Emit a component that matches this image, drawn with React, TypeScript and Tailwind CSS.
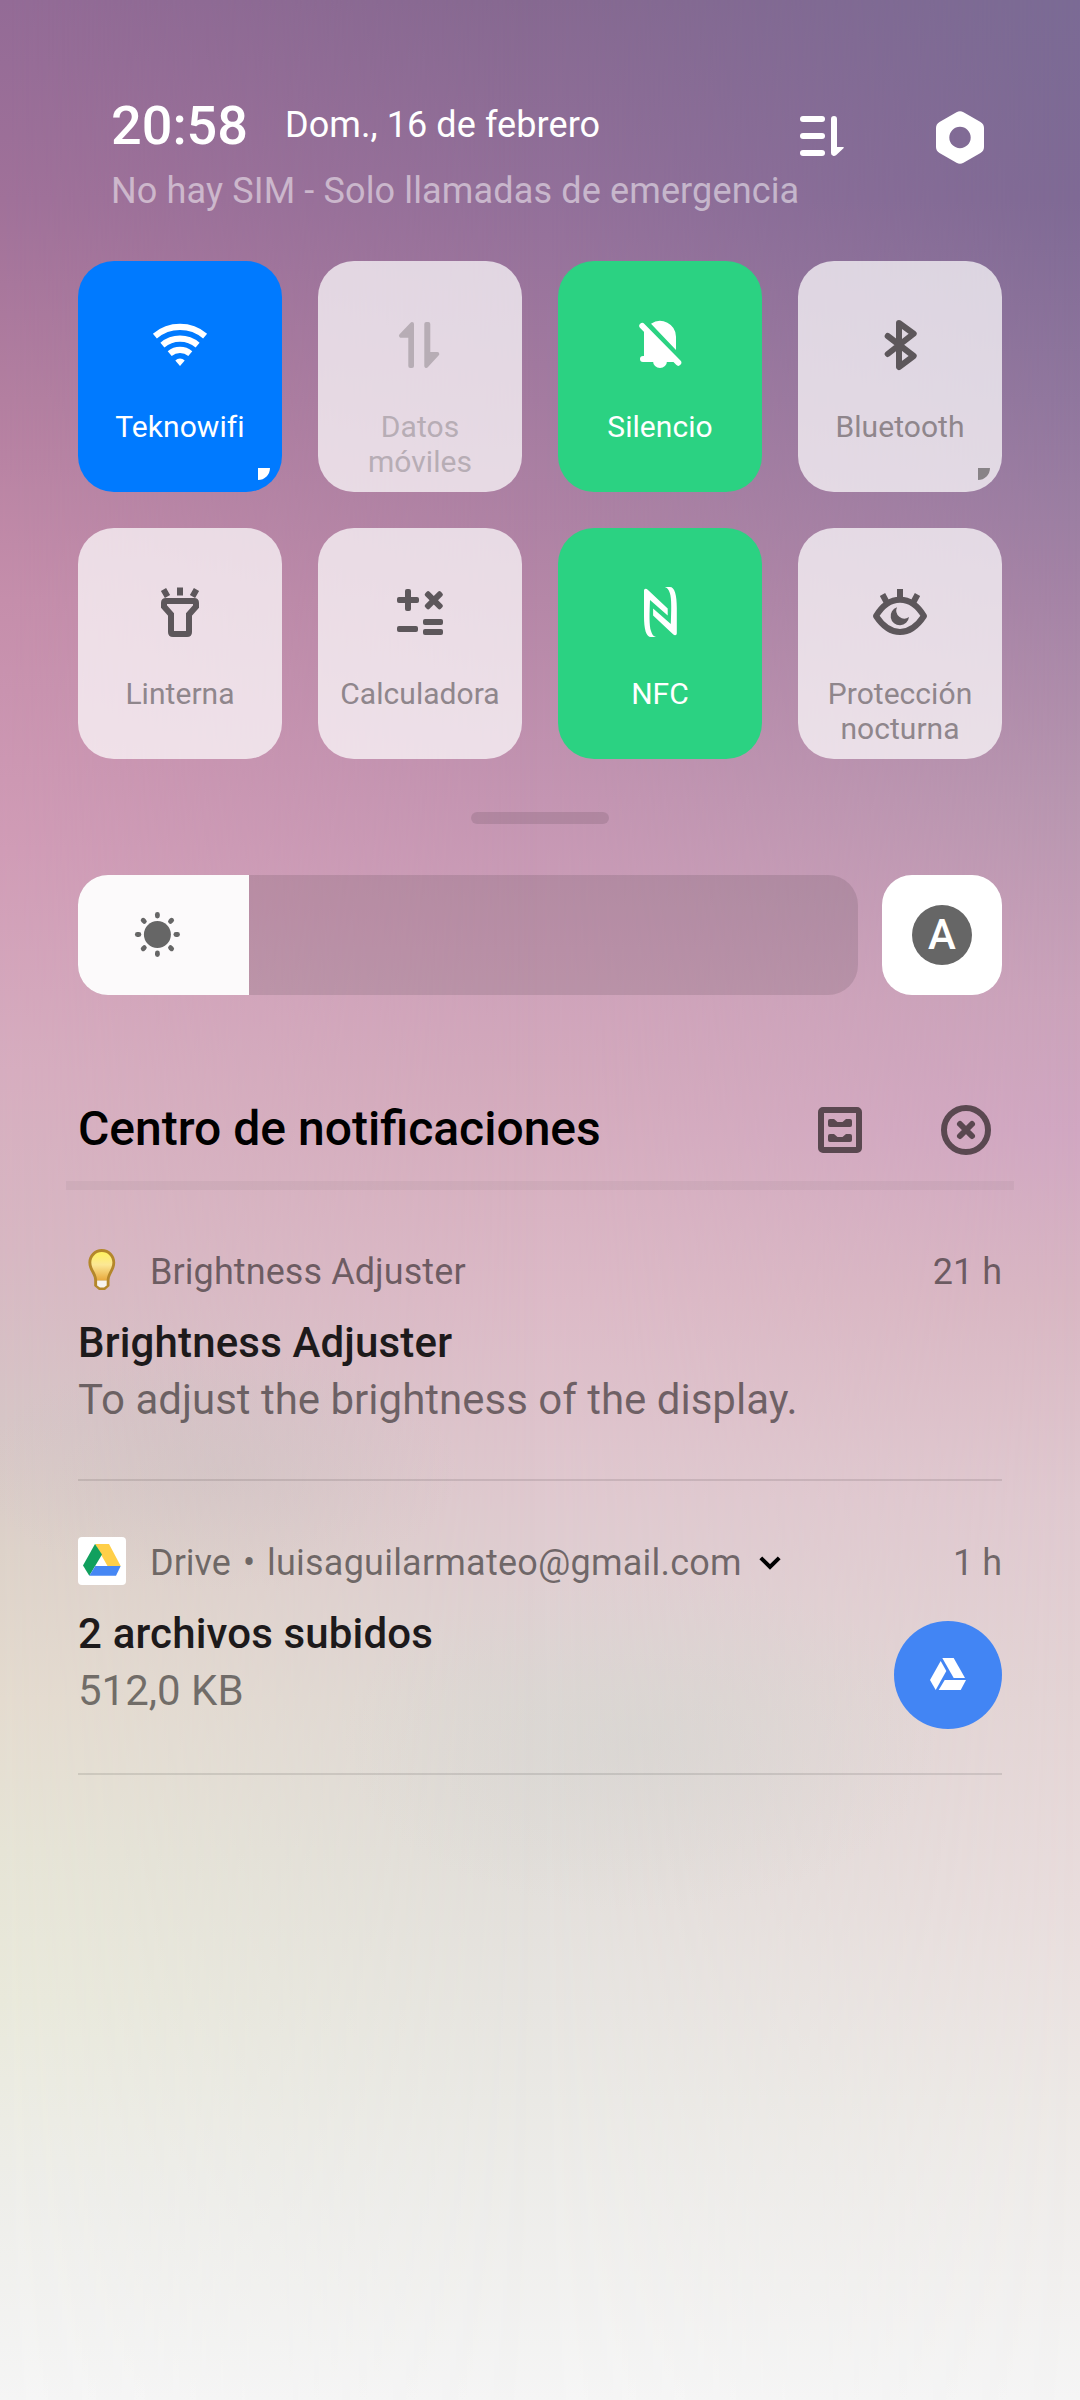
import type { ReactNode } from "react";
import clsx from "clsx";

interface Tile {
  label: string;
  state: "wifi" | "on" | "off" | "disabled";
  icon: ReactNode;
  expandable?: boolean;
}

interface NotificationProps {
  icon: ReactNode;
  app: ReactNode;
  time: string;
  title: string;
  body: string;
  largeIcon?: ReactNode;
  className?: string;
}

const tiles: Tile[] = [
  {
    label: "Teknowifi",
    state: "wifi",
    expandable: true,
    icon: (
      <>
        <g fill="none" stroke="currentColor" strokeWidth="6.2">
          <path d="M4.9 21.1A39 39 0 0 1 55.1 21.1" />
          <path d="M12.4 30.1A27.3 27.3 0 0 1 47.6 30.1" />
          <path d="M19.7 38.7A16 16 0 0 1 40.3 38.7" />
        </g>
        <path d="M30 51L25.3 45.4A7 7 0 0 1 34.7 45.4Z" />
      </>
    ),
  },
  {
    label: "Datos móviles",
    state: "disabled",
    icon: (
      <g stroke="currentColor" strokeWidth="4" strokeLinejoin="round">
        <path d="M22 9L11 20.7H20.3V51H22Z" />
        <path d="M36.3 9H38.3V39H47.3L36.3 51Z" />
      </g>
    ),
  },
  {
    label: "Silencio",
    state: "on",
    icon: (
      <>
        <path d="M21 8.7A16 16 0 0 1 46 21.7V35Z" />
        <path d="M14 13V41H13A3 3 0 0 0 13 47H48Z" />
        <path d="M23 46A7 7 0 0 0 37 46Z" />
        <path d="M12.3 11L48.3 47.7" stroke="currentColor" strokeWidth="6" strokeLinecap="round" />
      </>
    ),
  },
  {
    label: "Bluetooth",
    state: "off",
    expandable: true,
    icon: (
      <path
        d="M17.7 21L43.7 41L29 52V8L43.7 18.7L17.7 39"
        fill="none"
        stroke="currentColor"
        strokeWidth="6"
        strokeLinecap="round"
        strokeLinejoin="round"
      />
    ),
  },
  {
    label: "Linterna",
    state: "off",
    icon: (
      <g fill="none" stroke="currentColor" strokeWidth="6">
        <path d="M16 19H44Q46 19 46 21V24.5L39 32.5V50Q39 52 37 52H23Q21 52 21 50V32.5L14 24.5V21Q14 19 16 19Z" />
        <path d="M30 5.5V13.5M13.5 7.5L17.5 14.5M46.5 7.5L42.5 14.5" />
      </g>
    ),
  },
  {
    label: "Calculadora",
    state: "off",
    icon: (
      <>
        <rect x="7" y="15" width="22" height="6" rx="2" />
        <rect x="15" y="7" width="6" height="22" rx="2" />
        <g transform="rotate(45 43.8 18.3)">
          <rect x="32.8" y="15.3" width="22" height="6" rx="2" />
          <rect x="40.8" y="7.3" width="6" height="22" rx="2" />
        </g>
        <rect x="7" y="44" width="21" height="6" rx="2" />
        <rect x="33" y="37" width="20" height="6" rx="2" />
        <rect x="33" y="47" width="20" height="6" rx="2" />
      </>
    ),
  },
  {
    label: "NFC",
    state: "on",
    icon: (
      <>
        <path d="M14 9C14 6.5 16 6 18 8L37.7 26.5V33.5L20 18C19.5 30 19 44 21 49C22 52.5 23.5 54.5 26 55H21C16 55 14 47 14 34Z" />
        <path
          transform="rotate(180 30.4 30)"
          d="M14 9C14 6.5 16 6 18 8L37.7 26.5V33.5L20 18C19.5 30 19 44 21 49C22 52.5 23.5 54.5 26 55H21C16 55 14 47 14 34Z"
        />
      </>
    ),
  },
  {
    label: "Protección nocturna",
    state: "off",
    icon: (
      <>
        <g fill="none" stroke="currentColor" strokeWidth="6" strokeLinejoin="round">
          <path d="M6 34C12 24 20 17.7 30 17.7S48 24 54 34C48 43 40 50 30 50S12 43 6 34Z" />
          <path d="M30 7V16M12.5 12.5L16.5 20M47.5 12.5L43.5 20" />
        </g>
        <path d="M27 25.3A9.2 9.2 0 1 0 39 35A8 8 0 0 1 27 25.3Z" />
      </>
    ),
  },
];

function Wallpaper() {
  return (
    <div className="absolute inset-0 -z-10 bg-[linear-gradient(180deg,#7b6b95_0px,#7f6a95_200px,#90779e_400px,#a584a6_600px,#b896b0_800px,#cba3bb_1000px,#d1a7c2_1130px,#d9b7c3_1300px,#e0c9d0_1500px,#e4d4d5_1700px,#e9dddd_1900px,#ede9e6_2100px,#f5f5f5_2400px)]">
      <div className="absolute inset-0 bg-[linear-gradient(180deg,#866991_0px,#93709a_200px,#a47ba0_400px,#b587a7_600px,#c495b2_800px,#cda0b9_950px,#d4abbd_1100px,#dcbac7_1300px,#dfc9cf_1500px,#dfd8d5_1700px,#e2deda_1850px,#eae9e5_2100px,#f5f5f5_2400px)] [mask-image:linear-gradient(to_right,#000_50%,transparent)]" />
      <div className="absolute inset-0 bg-[linear-gradient(180deg,#936b96_0px,#a07199_200px,#b37fa0_400px,#c58eab_600px,#d09cb6_850px,#d6adbf_1070px,#d7b7c2_1250px,#d6c5c6_1420px,#ddd2c9_1550px,#e4dbcf_1700px,#e6e4d6_1850px,#e9e9db_2000px,#eeeeea_2200px,#f5f5f5_2400px)] [mask-image:linear-gradient(to_right,#000,transparent_50%)]" />
      <div className="absolute inset-0 bg-[radial-gradient(240px_120px_at_220px_1470px,rgba(195,188,188,0.28),transparent),radial-gradient(300px_170px_at_640px_1740px,rgba(208,210,205,0.4),transparent)]" />
    </div>
  );
}

function TileButton({ tile }: { tile: Tile }) {
  return (
    <button
      className={clsx(
        "relative flex h-[231px] flex-col items-center rounded-[36px] pt-[54px]",
        tile.state === "wifi" && "bg-[#007aff] text-white",
        tile.state === "on" && "bg-[#2bd282] text-white",
        tile.state === "off" && "bg-white/71 text-[#5d575b]",
        tile.state === "disabled" && "bg-white/71 text-[#b7adb5]"
      )}
    >
      <svg viewBox="0 0 60 60" className="h-[60px] w-[60px]" fill="currentColor">
        {tile.icon}
      </svg>
      <span
        className={clsx(
          "mt-[34px] w-[172px] text-center text-[30px] leading-[35px] tracking-[0.05px]",
          tile.state === "off" && "text-[#8f868c]"
        )}
      >
        {tile.label}
      </span>
      {tile.expandable && (
        <span
          className={clsx(
            "absolute right-3 bottom-3 h-3 w-3 rounded-br-full",
            tile.state === "off" ? "bg-[#888387]" : "bg-white"
          )}
        />
      )}
    </button>
  );
}

function Header() {
  return (
    <header className="flex h-[261px] justify-between pt-[94px] pr-[18px] pl-[33px] text-white">
      <div>
        <div className="flex items-start">
          <span className="text-[54px] leading-[64px] font-medium">20:58</span>
          <span className="mt-[9px] ml-[37px] text-[36px] leading-[44px] tracking-[0.08px]">Dom., 16 de febrero</span>
        </div>
        <p className="mt-[11px] text-[36px] leading-[44px] tracking-[0.14px] whitespace-nowrap text-white/50">
          No hay SIM - Solo llamadas de emergencia
        </p>
      </div>
      <div className="-ml-20 flex items-start pt-[17px]">
        <svg viewBox="0 0 44 40" className="mt-[5px] mr-[92px] h-10 w-11" fill="currentColor">
          <rect width="25" height="6" rx="3" />
          <rect y="17" width="25" height="6" rx="3" />
          <rect y="34" width="25" height="6" rx="3" />
          <path d="M31 3A3 3 0 0 1 37 3V31H43Q44.5 31.2 43.5 32.3L36 39.2Q34.5 40.4 33 39.8Q31 39 31 37Z" />
        </svg>
        <svg viewBox="0 0 48 53" className="h-[53px] w-12" fill="currentColor" fillRule="evenodd">
          <path d="M20.5 1.2Q24-.9 27.5 1.2L44.5 11Q48 13.2 48 17V36Q48 39.8 44.5 42L27.5 51.8Q24 53.9 20.5 51.8L3.5 42Q0 39.8 0 36V17Q0 13.2 3.5 11ZM24 15.8A10.7 10.7 0 1 0 24 37.2A10.7 10.7 0 1 0 24 15.8Z" />
        </svg>
      </div>
    </header>
  );
}

function BrightnessRow() {
  return (
    <div className="mt-[51px] flex gap-6">
      <div className="h-[120px] w-[780px] overflow-hidden rounded-[30px] bg-black/10">
        <div className="h-full w-[171px] bg-[#fcfafb] pt-9 pl-[55px]">
          <svg viewBox="0 0 48 48" className="h-12 w-12" fill="#666">
            <circle cx="24.4" cy="23.5" r="13.5" />
            {[0, 45, 90, 135, 180, 225, 270, 315].map((angle) => (
              <rect
                key={angle}
                x="22"
                y="1"
                width="4.8"
                height="6.4"
                rx="2.4"
                transform={`rotate(${angle} 24.4 23.5)`}
              />
            ))}
          </svg>
        </div>
      </div>
      <button className="flex h-[120px] w-[120px] items-center justify-center rounded-[30px] bg-white">
        <span className="flex h-[60px] w-[60px] items-center justify-center rounded-full bg-[#666] text-[42px] leading-none font-medium text-white">
          A
        </span>
      </button>
    </div>
  );
}

function Notification({ icon, app, time, title, body, largeIcon, className }: NotificationProps) {
  return (
    <article className={clsx("border-b-2 border-black/10 pt-14", className)}>
      <div className="flex h-12 items-center text-[36px] text-black/50">
        {icon}
        <div className="mt-[3px] ml-6 flex items-center leading-[48px]">{app}</div>
        <span className="mt-[3px] ml-auto leading-[48px]">{time}</span>
      </div>
      <div className="mt-5 flex justify-between text-[42px] leading-[57px]">
        <div>
          <h3 className="font-medium tracking-[0.16px] text-[#1d1a1b]">{title}</h3>
          <p className="text-black/50">{body}</p>
        </div>
        {largeIcon}
      </div>
    </article>
  );
}

function BulbIcon() {
  return (
    <svg viewBox="0 0 48 48" className="h-12 w-12">
      <defs>
        <linearGradient id="bulb" x1="0" y1="0" x2="0" y2="1">
          <stop offset="0" stopColor="#fff25f" />
          <stop offset="0.45" stopColor="#fbe795" />
          <stop offset="1" stopColor="#e8a93c" />
        </linearGradient>
      </defs>
      <path
        d="M23.8 3C31.5 3 37.2 9 37.2 16.5C37.2 24 31.8 28 31.5 34V40L27 44H21L16.2 40V34C16 28 10.4 24 10.4 16.5C10.4 9 16.3 3 23.8 3Z"
        fill="#b4872a"
      />
      <path
        d="M23.8 6C30 6 34.4 11 34.4 16.5C34.4 23 29 27 28.6 34.5H19.2C18.8 27 13.3 23 13.3 16.5C13.3 11 17.8 6 23.8 6Z"
        fill="url(#bulb)"
      />
      <path d="M19.1 34.5H28.7V39.5L26 41.5H22L19.1 39.5Z" fill="#f7f4f0" />
    </svg>
  );
}

function DriveIcon() {
  return (
    <svg viewBox="0 0 48 48" className="h-12 w-12 rounded bg-white">
      <path d="M17 7H31L42.7 29H29.5Z" fill="#ffcf48" />
      <path d="M17 7L24 17.5L11.3 38.7L5 28.5Z" fill="#11a05e" />
      <path d="M17.3 29H42.7L38 38.7H11.3Z" fill="#4687f4" />
    </svg>
  );
}

export default function App() {
  return (
    <main className="relative isolate h-[2400px] w-[1080px] overflow-hidden px-[78px] font-[Roboto,sans-serif]">
      <Wallpaper />
      <Header />

      <section className="grid grid-cols-4 gap-9">
        {tiles.map((tile) => (
          <TileButton key={tile.label} tile={tile} />
        ))}
      </section>

      <div className="mx-auto mt-[53px] h-3 w-[138px] rounded-full bg-black/10" />

      <BrightnessRow />

      <div className="mt-[105px] flex h-[60px] items-center">
        <h2 className="-mt-[2px] text-[48px] leading-[60px] font-medium text-black">Centro de notificaciones</h2>
        <svg viewBox="0 0 44 46" className="ml-auto h-[46px] w-11 text-[#5a4850]" fill="currentColor">
          <rect x="3" y="3" width="38" height="40" rx="2" fill="none" stroke="currentColor" strokeWidth="6" />
          <path d="M12 12H16L19.5 15H24.5L28 12H32Q34 12 34 14V18Q34 20 32 20H12Q10 20 10 18V14Q10 12 12 12Z" />
          <path d="M12 27H16L19.5 30H24.5L28 27H32Q34 27 34 29V33Q34 35 32 35H12Q10 35 10 33V29Q10 27 12 27Z" />
        </svg>
        <svg
          viewBox="0 0 50 50"
          className="mr-[11px] ml-[79px] h-[50px] w-[50px] text-[#5a4850]"
          fill="none"
          stroke="currentColor"
          strokeWidth="6"
          strokeLinecap="round"
        >
          <circle cx="25" cy="25" r="22" />
          <path d="M19 19L31 31M31 19L19 31" />
        </svg>
      </div>
      <div className="-mx-3 mt-[21px] h-[9px] bg-black/4" />

      <Notification
        icon={<BulbIcon />}
        app={<span className="tracking-[0.08px]">Brightness Adjuster</span>}
        time="21 h"
        title="Brightness Adjuster"
        body="To adjust the brightness of the display."
        className="pb-[51px]"
      />
      <Notification
        icon={<DriveIcon />}
        app={
          <>
            <span>Drive</span>
            <span className="mx-3">•</span>
            <span className="tracking-[0.22px]">luisaguilarmateo@gmail.com</span>
            <svg viewBox="0 0 22 14" className="ml-[17px] h-[14px] w-[22px]" fill="none" stroke="#000" strokeWidth="4">
              <path d="M1.8 1.8L11 11L20.2 1.8" />
            </svg>
          </>
        }
        time="1 h"
        title="2 archivos subidos"
        body="512,0 KB"
        largeIcon={
          <svg viewBox="0 0 108 108" className="mt-4 h-[108px] w-[108px] rounded-full bg-[#4285f4]" fill="#fff">
            <path d="M48.3 37H59.7L71 57H59.7Z" />
            <path d="M46.7 40L52.3 50L41.7 69L36 59Z" />
            <path d="M50.7 59H72L66.7 69H44.7Z" />
          </svg>
        }
        className="pb-11"
      />
    </main>
  );
}
